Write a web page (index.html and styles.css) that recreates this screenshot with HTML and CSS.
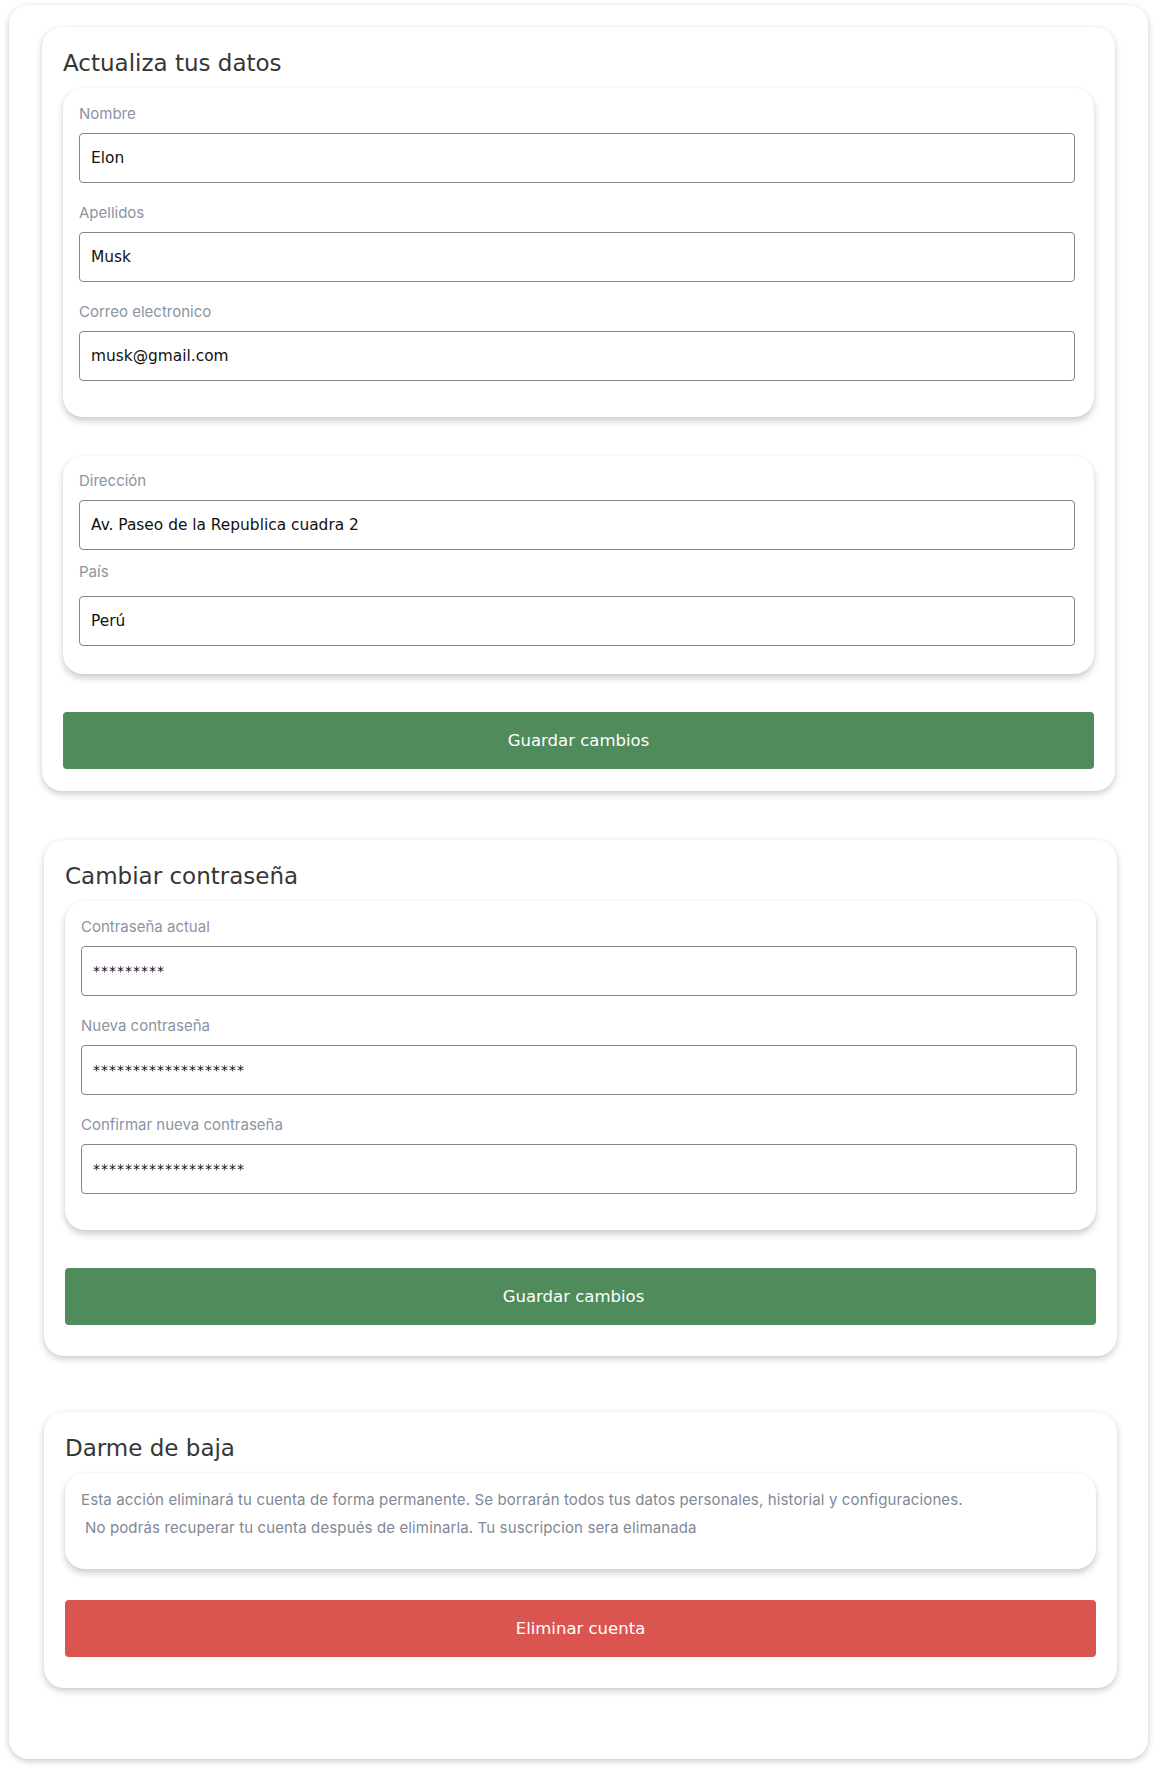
FILE: index.html
```html
<!DOCTYPE html>
<html lang="es">
<head>
<meta charset="utf-8">
<title>Mi cuenta</title>
<link rel="stylesheet" href="styles.css">
</head>
<body>
<main class="page">
  <section class="card">
    <h2 class="card-title">Actualiza tus datos</h2>
    <div class="panel">
      <div class="field">
        <label class="label">Nombre</label>
        <input class="input" type="text" value="Elon">
      </div>
      <div class="field">
        <label class="label">Apellidos</label>
        <input class="input" type="text" value="Musk">
      </div>
      <div class="field">
        <label class="label">Correo electronico</label>
        <input class="input" type="text" value="musk@gmail.com">
      </div>
    </div>
    <div class="panel panel--compact">
      <div class="field">
        <label class="label">Dirección</label>
        <input class="input" type="text" value="Av. Paseo de la Republica cuadra 2">
      </div>
      <div class="field field--select">
        <label class="label">País</label>
        <input class="input" type="text" value="Perú">
      </div>
    </div>
    <button class="btn btn--green">Guardar cambios</button>
  </section>

  <section class="card card--shift card--tall">
    <h2 class="card-title">Cambiar contraseña</h2>
    <div class="panel">
      <div class="field">
        <label class="label">Contraseña actual</label>
        <input class="input input--secret" type="text" value="*********">
      </div>
      <div class="field">
        <label class="label">Nueva contraseña</label>
        <input class="input input--secret" type="text" value="*******************">
      </div>
      <div class="field">
        <label class="label">Confirmar nueva contraseña</label>
        <input class="input input--secret" type="text" value="*******************">
      </div>
    </div>
    <button class="btn btn--green btn--offset">Guardar cambios</button>
  </section>

  <section class="card card--shift card--tall card--danger">
    <h2 class="card-title">Darme de baja</h2>
    <div class="panel panel--text">
      <p class="note">Esta acción eliminará tu cuenta de forma permanente. Se borrarán todos tus datos personales, historial y configuraciones.</p>
      <p class="note note--indent">No podrás recuperar tu cuenta después de eliminarla. Tu suscripcion sera elimanada</p>
    </div>
    <button class="btn btn--red">Eliminar cuenta</button>
  </section>
</main>
</body>
</html>
```

FILE: styles.css
```css
* {
  box-sizing: border-box;
}

html, body {
  margin: 0;
  background: #ffffff;
}

body {
  padding: 5px 10px 13px 9px;
  font-family: "Inter", "Liberation Sans", sans-serif;
}

.page {
  background: #ffffff;
  border-radius: 20px;
  box-shadow: 0 2px 6px rgba(0, 0, 0, 0.22);
  padding: 22px 33px 71px 33px;
}

.card {
  background: #ffffff;
  border-radius: 20px;
  box-shadow: 0 3px 7px rgba(0, 0, 0, 0.2), 0 0 2px rgba(0, 0, 0, 0.05);
  padding: 22px 21px 22px 21px;
}

.card--shift {
  margin-left: 2px;
  margin-right: -2px;
  margin-top: 49px;
}

.card--tall {
  padding-bottom: 31px;
}

.card--danger {
  margin-top: 56px;
}

.card-title {
  margin: 0 0 10px 0;
  font-family: "DejaVu Sans", sans-serif;
  font-weight: 400;
  font-size: 23px;
  line-height: 29px;
  color: #363636;
}

.panel {
  background: #ffffff;
  border-radius: 20px;
  box-shadow: 0 4px 7px rgba(0, 0, 0, 0.2), 0 0 2px rgba(0, 0, 0, 0.06);
  padding: 16px 19px 16px 16px;
}

.panel + .panel {
  margin-top: 39px;
}

.panel--compact {
  padding-top: 15px;
}

.field {
  margin-bottom: 20px;
}

.panel--compact .field {
  margin-bottom: 12px;
}

.label {
  display: block;
  font-family: "Inter", sans-serif;
  font-size: 15px;
  line-height: 20px;
  color: #8a94a3;
  margin-bottom: 9px;
}

.field--select .label {
  margin-bottom: 14px;
}

.input {
  display: block;
  width: 100%;
  height: 50px;
  margin: 0;
  padding: 0 11px;
  border: 1px solid #7d8792;
  border-radius: 4px;
  background: #ffffff;
  font-family: "DejaVu Sans", sans-serif;
  font-size: 15.4px;
  color: #111111;
  outline: none;
}

.input--secret {
  font-size: 14px;
  letter-spacing: 1px;
}

.btn {
  display: block;
  width: 100%;
  height: 57px;
  margin-top: 38px;
  border: none;
  border-radius: 4px;
  font-family: "DejaVu Sans", sans-serif;
  font-size: 16.5px;
  color: #ffffff;
  cursor: pointer;
}

.btn--green {
  background: #508b5c;
}

.btn--red {
  background: #db5550;
  margin-top: 31px;
}

.btn--offset {
  padding-right: 20px;
}

.panel--text {
  padding: 16px 16px 24px 16px;
}

.note {
  margin: 0 0 6px 0;
  font-family: "Inter", sans-serif;
  font-size: 15px;
  letter-spacing: 0.13px;
  line-height: 22px;
  color: #7f8896;
}

.note--indent {
  padding-left: 4px;
}
```
